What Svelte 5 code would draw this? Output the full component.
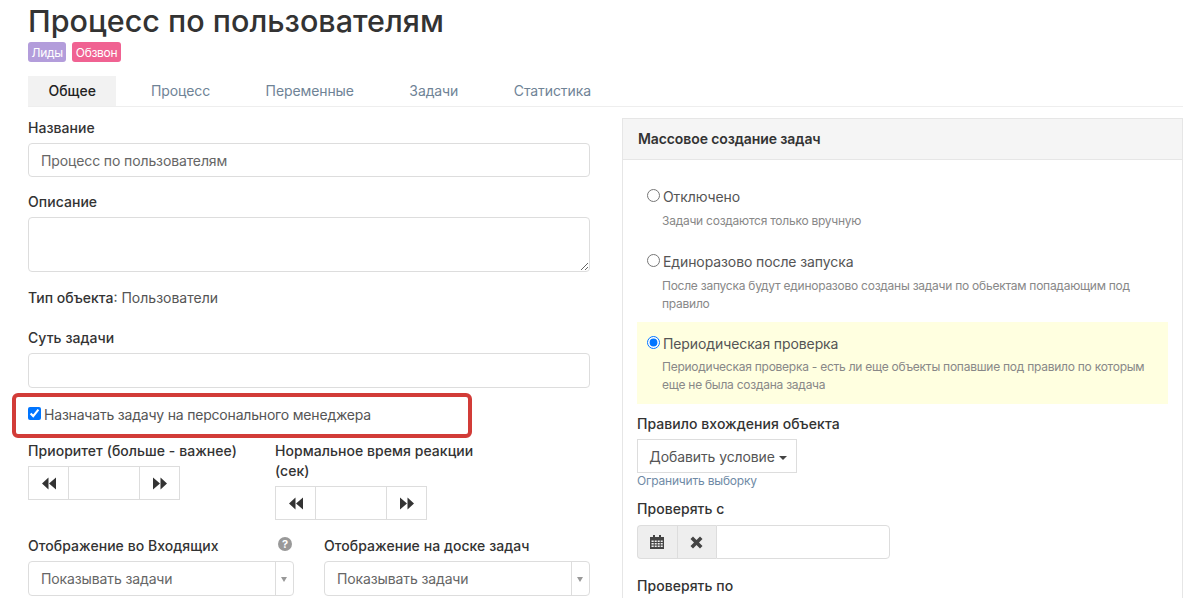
<script>
    const tabs = ["Общее", "Процесс", "Переменные", "Задачи", "Статистика"];
    const modes = [
        { title: "Отключено", text: "Задачи создаются только вручную" },
        { title: "Единоразово после запуска", text: "После запуска будут единоразово созданы задачи по обьектам попадающим под правило" },
        { title: "Периодическая проверка", text: "Периодическая проверка - есть ли еще объекты попавшие под правило по которым еще не была создана задача", active: true }
    ];
</script>

{#snippet stepper()}
    <div class="stepper">
        <button aria-label="Меньше">
            <svg width="14" height="13" viewBox="0 0 14 12"><path d="M0 6 6.500 0v12zM7 6l7-6v12z" /></svg>
        </button>
        <input type="text" />
        <button aria-label="Больше">
            <svg width="14" height="13" viewBox="0 0 14 12"><path d="M14 6 7.500 0v12zM7 6 0 0v12z" /></svg>
        </button>
    </div>
{/snippet}

{#snippet select(value)}
    <div class="select">
        <span class="value">{value}</span>
        <span class="arrow"></span>
    </div>
{/snippet}

<main>
    <section class="head">
        <h1>Процесс по пользователям</h1>
        <div class="tags">
            <span class="tag purple">Лиды</span>
            <span class="tag pink">Обзвон</span>
        </div>
        <nav class="tabs">
            {#each tabs as tab, i}
                <a href="#{i}" class:active={i === 0}>{tab}</a>
            {/each}
        </nav>
    </section>

    <div class="columns">
        <div class="left">
            <label class="field">
                <span class="label">Название</span>
                <input type="text" value="Процесс по пользователям" />
            </label>
            <label class="field">
                <span class="label">Описание</span>
                <textarea></textarea>
            </label>
            <p class="object-type"><b>Тип объекта</b>: Пользователи</p>
            <label class="field essence">
                <span class="label">Суть задачи</span>
                <input type="text" />
            </label>
            <div class="assign">
                <label class="check">
                    <input type="checkbox" checked />
                    Назначать задачу на персонального менеджера
                </label>
                <div class="highlight"></div>
            </div>
            <div class="steppers">
                <div class="step-col">
                    <span class="label">Приоритет (больше - важнее)</span>
                    {@render stepper()}
                </div>
                <div class="step-col">
                    <span class="label">Нормальное время реакции (сек)</span>
                    {@render stepper()}
                </div>
            </div>
            <div class="selects">
                <div class="select-col">
                    <div class="label-row">
                        <span class="label">Отображение во Входящих</span>
                        <span class="help">?</span>
                    </div>
                    {@render select("Показывать задачи")}
                </div>
                <div class="select-col">
                    <div class="label-row">
                        <span class="label">Отображение на доске задач</span>
                    </div>
                    {@render select("Показывать задачи")}
                </div>
            </div>
        </div>

        <aside class="panel">
            <div class="panel-head">Массовое создание задач</div>
            <div class="panel-body">
                {#each modes as mode}
                    <div class="mode" class:active={mode.active}>
                        <label class="radio">
                            <input type="radio" name="mode" checked={mode.active} />
                            {mode.title}
                        </label>
                        <p>{mode.text}</p>
                    </div>
                {/each}
                <div class="rule">
                    <span class="label">Правило вхождения объекта</span>
                    <button class="add">Добавить условие <i class="caret"></i></button>
                    <a class="limit" href="#limit">Ограничить выборку</a>
                </div>
                <div class="date">
                    <span class="label">Проверять с</span>
                    <div class="date-group">
                        <span class="addon">
                            <svg width="14" height="14" viewBox="0 0 14 14"><path d="M3 0h2v2h4V0h2v2h3v12H0V2h3zM1.500 5.500v1.500h2.200V5.500zm3.200 0v1.500h2V5.500zm3 0v1.500h2V5.500zm3 0v1.500h2V5.500zm-9.200 2.500v1.500h2.200V8zm3.200 0v1.500h2V8zm3 0v1.500h2V8zm3 0v1.500h2V8zm-9.200 2.500V12h2.200v-1.500zm3.200 0V12h2v-1.500zm3 0V12h2v-1.500zm3 0V12h2v-1.500z" fill-rule="evenodd" /></svg>
                        </span>
                        <span class="addon">
                            <svg width="13" height="13" viewBox="0 0 13 13"><path d="M3 .5 6.500 4 10 .5 12.500 3 9 6.500l3.500 3.500-2.500 2.500L6.500 9 3 12.500.5 10 4 6.500.5 3z" /></svg>
                        </span>
                        <input type="text" />
                    </div>
                </div>
                <div class="date">
                    <span class="label">Проверять по</span>
                </div>
            </div>
        </aside>
    </div>
</main>

<style>
    :global(body) {
        margin: 0;
        background: #fff;
    }

    main {
        height: 598px;
        overflow: hidden;
        padding: 0 16px 0 28px;
        font-family: "Inter", sans-serif;
        font-size: 14px;
        color: #444;
    }

    h1 {
        margin: 0;
        font-size: 30.5px;
        font-weight: 500;
        line-height: 41px;
        height: 42px;
        color: #333;
    }

    .tags {
        display: flex;
        gap: 6px;
        height: 20px;
    }

    .tag {
        padding: 0 3.500px;
        border-radius: 3px;
        font-size: 12px;
        letter-spacing: -0.3px;
        line-height: 21px;
        color: #fff;
    }

    .purple {
        background: #b39ddb;
    }

    .pink {
        background: #f06292;
    }

    .tabs {
        display: flex;
        gap: 15.500px;
        margin-top: 14px;
        border-bottom: 1px solid #eee;
    }

    .tabs a {
        padding: 0 20px;
        line-height: 30px;
        letter-spacing: -0.1px;
        color: #6f8396;
        text-decoration: none;
    }

    .tabs a.active {
        margin-right: -1px;
        padding: 0 20.500px;
        background: #f2f2f2;
        color: #222;
        font-weight: 500;
        letter-spacing: 0;
    }

    .columns {
        display: flex;
        gap: 32px;
        align-items: flex-start;
    }

    .left {
        width: 562px;
        flex: none;
        padding-top: 12px;
    }

    .label {
        display: block;
        font-weight: 500;
        letter-spacing: 0.05px;
        line-height: 17px;
        color: #333;
    }

    .field {
        display: block;
        margin-bottom: 16px;
    }

    .field .label {
        margin-bottom: 7px;
    }

    input[type="text"],
    textarea {
        display: block;
        box-sizing: border-box;
        width: 100%;
        margin: 0;
        border: 1px solid #ddd;
        border-radius: 4px;
        padding: 0 12px;
        font: inherit;
        letter-spacing: -0.12px;
        color: #666;
        background: #fff;
        outline: none;
    }

    input[type="text"] {
        height: 34px;
    }

    textarea {
        height: 55px;
    }

    .object-type {
        margin: 0;
        padding-top: 1px;
        line-height: 17px;
        color: #555;
    }

    .object-type b {
        font-weight: 500;
        color: #333;
    }

    .essence {
        margin: 23px 0 0;
    }

    .essence input[type="text"] {
        height: 35px;
    }

    .assign {
        position: relative;
        height: 53px;
    }

    .check {
        display: flex;
        align-items: center;
        gap: 3px;
        padding-top: 18px;
        line-height: 17px;
        letter-spacing: -0.19px;
        color: #555;
    }

    .check input {
        width: 13px;
        height: 13px;
        margin: -2px 0 0;
    }

    .highlight {
        position: absolute;
        top: 5px;
        left: -16px;
        width: 452px;
        height: 37px;
        border: 4px solid #d23c38;
        border-radius: 6px;
    }

    .steppers {
        display: flex;
        gap: 38px;
    }

    .step-col {
        width: 209px;
    }

    .step-col .label {
        line-height: 20px;
        margin-bottom: 5px;
    }

    .stepper {
        display: flex;
        width: 152px;
        height: 34px;
        box-sizing: border-box;
        border: 1px solid #ddd;
    }

    .stepper button {
        display: flex;
        align-items: center;
        justify-content: center;
        flex: none;
        width: 39px;
        padding: 0;
        border: 0;
        background: #fff;
    }

    .stepper svg {
        fill: #333;
    }

    .stepper input[type="text"] {
        flex: 1;
        min-width: 0;
        height: 100%;
        border: 0;
        border-left: 1px solid #ddd;
        border-right: 1px solid #ddd;
        border-radius: 0;
    }

    .selects {
        display: flex;
        gap: 30px;
        margin-top: 17px;
    }

    .select-col {
        width: 266px;
    }

    .label-row {
        display: flex;
        align-items: center;
        justify-content: space-between;
        height: 17px;
        margin-bottom: 7px;
    }

    .help {
        width: 14px;
        height: 14px;
        margin: -4px 2px 0 0;
        border-radius: 50%;
        background: #999;
        color: #fff;
        font-size: 11px;
        font-weight: 700;
        line-height: 14px;
        text-align: center;
    }

    .select {
        display: flex;
        height: 35px;
        box-sizing: border-box;
        border: 1px solid #ddd;
        border-radius: 4px;
    }

    .value {
        flex: 1;
        padding-left: 12px;
        line-height: 33px;
        letter-spacing: -0.12px;
        color: #666;
    }

    .arrow {
        position: relative;
        width: 17px;
        border-left: 1px solid #ddd;
    }

    .arrow::after {
        content: "";
        position: absolute;
        top: 15px;
        left: 5px;
        border: 3px solid transparent;
        border-top: 5px solid #999;
        border-bottom: 0;
    }

    .panel {
        flex: 1;
        margin-top: 11px;
        border: 1px solid #e6e6e6;
        border-bottom: 0;
    }

    .panel-head {
        padding: 0 15px;
        background: #f5f5f5;
        border-bottom: 1px solid #e6e6e6;
        font-weight: 600;
        letter-spacing: -0.1px;
        line-height: 40px;
        color: #333;
    }

    .panel-body {
        padding: 0 14px;
    }

    .mode {
        padding: 28px 10px 0;
    }

    .mode:nth-child(2) {
        padding-top: 23px;
        padding-bottom: 9px;
    }

    .mode.active {
        background: #ffffe0;
        padding-top: 13px;
        padding-bottom: 10px;
    }

    .radio {
        display: flex;
        align-items: center;
        gap: 3px;
        font-size: 14px;
        line-height: 17px;
        letter-spacing: -0.1px;
        color: #555;
    }

    .radio input {
        width: 13px;
        height: 13px;
        margin: -3px 0 0;
    }

    .mode p {
        margin: 7px 0 0 15px;
        font-size: 12px;
        letter-spacing: -0.25px;
        line-height: 18px;
        color: #888;
    }

    .mode.active p {
        margin-top: 6px;
    }

    .rule {
        margin-top: 11px;
    }

    .rule .label {
        margin-bottom: 7px;
    }

    .add {
        display: block;
        width: 160px;
        height: 34px;
        box-sizing: border-box;
        border: 1px solid #ddd;
        padding: 0 0 0 2px;
        background: #fff;
        font: inherit;
        letter-spacing: -0.1px;
        color: #555;
    }

    .caret {
        display: inline-block;
        vertical-align: middle;
        border: 4px solid transparent;
        border-top-color: #444;
        border-bottom: 0;
    }

    .limit {
        display: block;
        font-size: 12px;
        letter-spacing: -0.2px;
        line-height: 16px;
        color: #6f8aa6;
        text-decoration: none;
    }

    .date {
        margin-top: 11px;
    }

    .date .label {
        margin-bottom: 8px;
    }

    .date + .date {
        margin-top: 18px;
    }

    .date-group {
        display: flex;
        width: 253px;
    }

    .addon {
        display: flex;
        align-items: center;
        justify-content: center;
        flex: none;
        width: 39.500px;
        height: 34px;
        box-sizing: border-box;
        border: 1px solid #ddd;
        border-right: 0;
        background: #eee;
    }

    .addon:first-child {
        border-radius: 4px 0 0 4px;
    }

    .addon svg {
        fill: #444;
    }

    .date-group input[type="text"] {
        border-radius: 0 4px 4px 0;
    }
</style>
